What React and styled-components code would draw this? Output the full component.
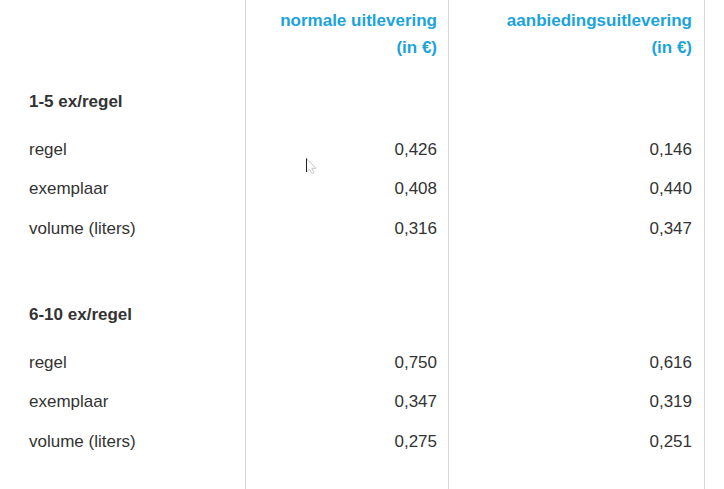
import React from "react";
import styled, { createGlobalStyle } from "styled-components";

const GlobalStyle = createGlobalStyle`
  html, body { margin: 0; padding: 0; background: #fff; }
  body {
    font-family: "Liberation Sans", Arial, sans-serif;
    font-size: 17px;
    color: #333;
  }
`;

const Page = styled.div`
  position: relative;
  display: flex;
  flex-direction: column;
  min-height: 100vh;
`;

const Row = styled.div`
  display: grid;
  grid-template-columns: 246px 203px 256px;
  height: ${(p) => p.$h}px;
  line-height: ${(p) => p.$lh || p.$h}px;
  flex: ${(p) => (p.$fill ? 1 : "none")};
`;

const Cell = styled.div`
  border-right: 1px solid #d6d6d6;
  padding: ${(p) => p.$pt || 0}px ${(p) => p.$pr || 0}px 0 ${(p) => p.$pl || 0}px;
  text-align: ${(p) => p.$align || "left"};
  white-space: nowrap;
`;

const HeadText = styled.div`
  color: #1ba3dc;
  font-weight: bold;
  line-height: 27px;
`;

const GroupTitle = styled.span`
  font-weight: bold;
`;

const Cursor = styled.svg`
  position: absolute;
  left: 305px;
  top: 157px;
`;

const groups = [
  {
    title: "1-5 ex/regel",
    rows: [
      ["regel", "0,426", "0,146"],
      ["exemplaar", "0,408", "0,440"],
      ["volume (liters)", "0,316", "0,347"],
    ],
  },
  {
    title: "6-10 ex/regel",
    rows: [
      ["regel", "0,750", "0,616"],
      ["exemplaar", "0,347", "0,319"],
      ["volume (liters)", "0,275", "0,251"],
    ],
  },
];

export default function App() {
  return (
    <>
      <GlobalStyle />
      <Page>
        <Row $h={77.7} $lh={27}>
          <Cell />
          <Cell $align="right" $pr={11} $pt={7}>
            <HeadText>normale uitlevering</HeadText>
            <HeadText>(in €)</HeadText>
          </Cell>
          <Cell $align="right" $pr={12} $pt={7}>
            <HeadText>aanbiedingsuitlevering</HeadText>
            <HeadText>(in €)</HeadText>
          </Cell>
        </Row>
        {groups.map((g, gi) => (
          <React.Fragment key={g.title}>
            {gi > 0 && (
              <Row $h={42.5}>
                <Cell />
                <Cell />
                <Cell />
              </Row>
            )}
            <Row $h={52} $lh={47}>
              <Cell $pl={29}>
                <GroupTitle>{g.title}</GroupTitle>
              </Cell>
              <Cell />
              <Cell />
            </Row>
            {g.rows.map((r) => (
              <Row $h={39.5} key={r[0]}>
                <Cell $pl={29}>{r[0]}</Cell>
                <Cell $align="right" $pr={11}>{r[1]}</Cell>
                <Cell $align="right" $pr={12}>{r[2]}</Cell>
              </Row>
            ))}
          </React.Fragment>
        ))}
        <Row $h={0} $fill>
          <Cell />
          <Cell />
          <Cell />
        </Row>
        <Cursor width="14" height="18" viewBox="0 0 14 18">
          <path d="M1.5 1.5 L1.5 15 L4.5 12 L7 16.5 L9 15.5 L6.8 11.3 L11 11.3 Z" fill="#fff" stroke="#c8c8c8" strokeWidth="1" />
          <path d="M1.5 1.5 L1.5 15" stroke="#222" strokeWidth="1" />
        </Cursor>
      </Page>
    </>
  );
}
